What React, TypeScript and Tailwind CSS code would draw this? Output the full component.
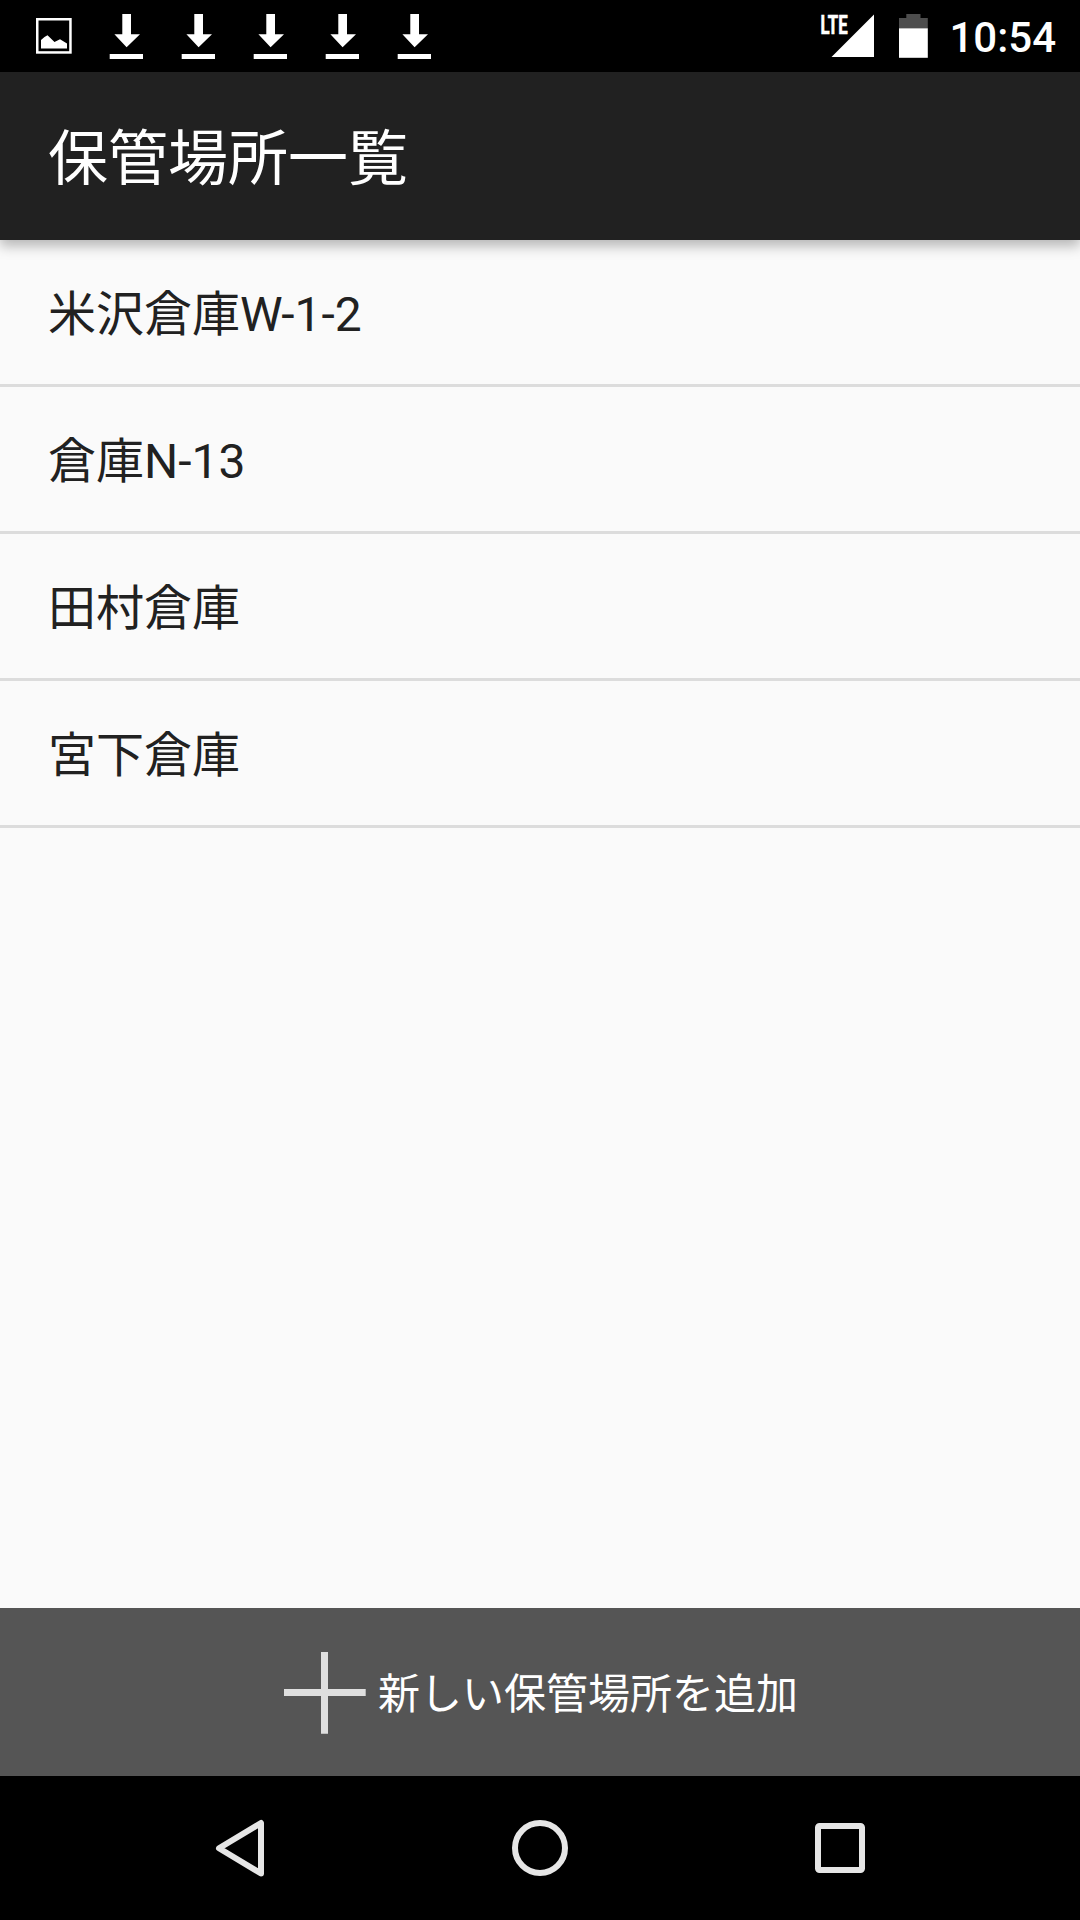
const locations = ["米沢倉庫W-1-2", "倉庫N-13", "田村倉庫", "宮下倉庫"];

function PictureIcon() {
  return (
    <svg className="size-[72px]" viewBox="0 0 72 72" fill="none">
      <rect x="19.25" y="19.25" width="33.2" height="33.2" stroke="#fff" strokeWidth="2.5" />
      <path d="M23 48.5V40l3.5-3 3-1.8 7 6.8 5.5-2.8 7 4.3v5z" fill="#fff" />
    </svg>
  );
}

function DownloadIcon() {
  return (
    <svg className="size-[72px]" viewBox="0 0 72 72" fill="#fff">
      <path d="M32.3 14H41v20.3h9L36.6 47.2 24.4 34.3h7.9z" />
      <path d="M19.7 54H53v5H19.7z" />
    </svg>
  );
}

function SignalIcon() {
  return (
    <svg className="h-[72px] w-[54px]" viewBox="0 0 54 72" fill="#fff">
      <path d="M11.5 57L54 14.5V57z" />
      <text
        x="0.6"
        y="34"
        textLength="27"
        lengthAdjust="spacingAndGlyphs"
        stroke="#fff"
        strokeWidth="0.7"
        className="font-['Roboto'] text-[26px] font-bold"
      >
        LTE
      </text>
    </svg>
  );
}

function BatteryIcon() {
  return (
    <svg className="h-[72px] w-[29px]" viewBox="0 0 29 72">
      <path d="M7.3 14h14.2v4h7.3v10.5H0V18h7.3z" fill="#4d4d4d" />
      <path d="M0 28.3h28.8v29.5H0z" fill="#fff" />
    </svg>
  );
}

export default function App() {
  return (
    <div className="flex h-[1920px] w-[1080px] flex-col overflow-hidden bg-[#fafafa] font-['Roboto','Noto_Sans_CJK_JP',sans-serif]">
      <div className="flex h-[72px] shrink-0 items-center justify-between bg-black pr-6 pl-[18px]">
        <div className="flex">
          <PictureIcon />
          {[0, 1, 2, 3, 4].map((i) => (
            <DownloadIcon key={i} />
          ))}
        </div>
        <div className="flex items-center">
          <SignalIcon />
          <div className="ml-[25px]">
            <BatteryIcon />
          </div>
          <span className="ml-[21px] pt-1 text-[42px] leading-[72px] font-medium text-white">10:54</span>
        </div>
      </div>

      <header className="z-10 flex h-[168px] shrink-0 items-center bg-[#212121] pt-2 pl-12 shadow-[0_6px_12px_rgba(0,0,0,0.28)]">
        <h1 className="text-[60px] leading-[72px] text-white">保管場所一覧</h1>
      </header>

      <main className="flex-1">
        <ul>
          {locations.map((name) => (
            <li
              key={name}
              className="flex h-[147px] items-center border-b-[3px] border-[#dcdcdc] pt-1.5 pl-12 text-[48px] leading-[60px] text-[#212121]"
            >
              {name}
            </li>
          ))}
        </ul>
      </main>

      <button className="flex h-[168px] shrink-0 items-center bg-[#555555] pt-0.5 pl-[284px] text-[42px] leading-[60px] text-white">
        <svg className="size-[82px]" viewBox="0 0 82 82" fill="#dfdfdf">
          <path d="M37 0h7v37h37.7v7H44v37.7h-7V44H0v-7h37z" />
        </svg>
        <span className="ml-3 pt-1">新しい保管場所を追加</span>
      </button>

      <nav className="flex h-[144px] shrink-0 items-center justify-center gap-[228px] bg-black">
        <svg className="size-[72px]" viewBox="0 0 72 72" fill="none" stroke="#e6e6e6" strokeWidth="6" strokeLinejoin="round">
          <path d="M15 36.3L57 11v50.5z" />
        </svg>
        <svg className="size-[72px]" viewBox="0 0 72 72" fill="none" stroke="#e6e6e6" strokeWidth="6">
          <circle cx="36" cy="36" r="25" />
        </svg>
        <svg className="size-[72px]" viewBox="0 0 72 72" fill="none" stroke="#e6e6e6" strokeWidth="6">
          <rect x="14" y="14" width="44" height="44" rx="1.5" />
        </svg>
      </nav>
    </div>
  );
}
